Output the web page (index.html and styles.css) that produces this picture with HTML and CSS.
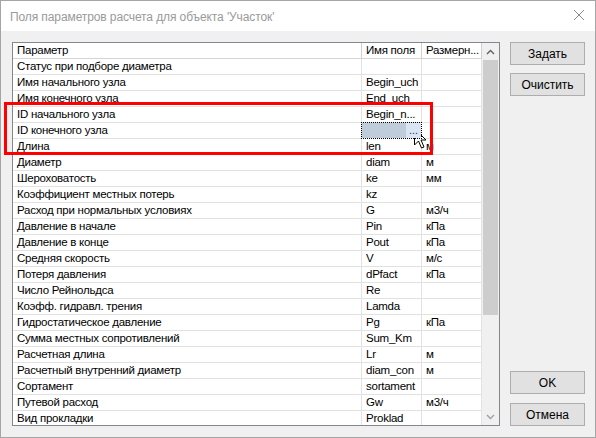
FILE: index.html
```html
<!DOCTYPE html>
<html>
<head>
<meta charset="utf-8">
<link rel="stylesheet" href="styles.css">
</head>
<body>
<div class="window">
  <div class="titlebar">
    <span class="title">Поля параметров расчета для объекта 'Участок'</span>
    <svg class="close" width="12" height="12" viewBox="0 0 12 12"><path d="M1 1 L11 11 M11 1 L1 11" stroke="#8a8a8a" stroke-width="1" fill="none"/></svg>
  </div>
  <div class="content">
    <div class="grid-box">
      <div class="grid">
        <div class="cell head">Параметр</div><div class="cell head">Имя поля</div><div class="cell head">Размерн...</div>
        <div class="cell">Статус при подборе диаметра</div><div class="cell"></div><div class="cell"></div>
        <div class="cell">Имя начального узла</div><div class="cell">Begin_uch</div><div class="cell"></div>
        <div class="cell">Имя конечного узла</div><div class="cell">End_uch</div><div class="cell"></div>
        <div class="cell">ID начального узла</div><div class="cell">Begin_n...</div><div class="cell"></div>
        <div class="cell">ID конечного узла</div><div class="cell selected"><span class="sel-fill"></span><span class="ellipsis-btn">...</span></div><div class="cell"></div>
        <div class="cell">Длина</div><div class="cell">len</div><div class="cell">м</div>
        <div class="cell">Диаметр</div><div class="cell">diam</div><div class="cell">м</div>
        <div class="cell">Шероховатость</div><div class="cell">ke</div><div class="cell">мм</div>
        <div class="cell">Коэффициент местных потерь</div><div class="cell">kz</div><div class="cell"></div>
        <div class="cell">Расход при нормальных условиях</div><div class="cell">G</div><div class="cell">м3/ч</div>
        <div class="cell">Давление в начале</div><div class="cell">Pin</div><div class="cell">кПа</div>
        <div class="cell">Давление в конце</div><div class="cell">Pout</div><div class="cell">кПа</div>
        <div class="cell">Средняя скорость</div><div class="cell">V</div><div class="cell">м/с</div>
        <div class="cell">Потеря давления</div><div class="cell">dPfact</div><div class="cell">кПа</div>
        <div class="cell">Число Рейнольдса</div><div class="cell">Re</div><div class="cell"></div>
        <div class="cell">Коэфф. гидравл. трения</div><div class="cell">Lamda</div><div class="cell"></div>
        <div class="cell">Гидростатическое давление</div><div class="cell">Pg</div><div class="cell">кПа</div>
        <div class="cell">Сумма местных сопротивлений</div><div class="cell">Sum_Km</div><div class="cell"></div>
        <div class="cell">Расчетная длина</div><div class="cell">Lr</div><div class="cell">м</div>
        <div class="cell">Расчетный внутренний диаметр</div><div class="cell">diam_con</div><div class="cell">м</div>
        <div class="cell">Сортамент</div><div class="cell">sortament</div><div class="cell"></div>
        <div class="cell">Путевой расход</div><div class="cell">Gw</div><div class="cell">м3/ч</div>
        <div class="cell">Вид прокладки</div><div class="cell">Proklad</div><div class="cell"></div>
      </div>
      <div class="scrollbar">
        <div class="arrow"><svg width="9" height="6" viewBox="0 0 9 6"><path d="M1 5 L4.5 1.5 L8 5" stroke="#606060" stroke-width="1.4" fill="none"/></svg></div>
        <div class="track"><div class="thumb"></div></div>
        <div class="arrow"><svg width="9" height="6" viewBox="0 0 9 6"><path d="M1 1 L4.5 4.5 L8 1" stroke="#a0a0a0" stroke-width="1.4" fill="none"/></svg></div>
      </div>
    </div>
    <div class="buttons">
      <div class="top-buttons">
        <div class="btn">Задать</div>
        <div class="btn">Очистить</div>
      </div>
      <div class="bottom-buttons">
        <div class="btn">OK</div>
        <div class="btn">Отмена</div>
      </div>
    </div>
  </div>
  <div class="highlight"></div>
  <svg class="cursor" width="14" height="22" viewBox="0 0 14 22"><path d="M0.5 0.5 L0.5 17 L4.5 13 L7.5 20 L10 19 L7 12 L12 12 Z" fill="#fff" stroke="#000" stroke-width="1"/></svg>
</div>
</body>
</html>
```
FILE: styles.css
```css
* { box-sizing: border-box; }
html, body { margin: 0; padding: 0; }
body {
  width: 596px;
  height: 438px;
  overflow: hidden;
  font-family: "Liberation Sans", Arial, sans-serif;
  font-size: 11.5px;
  letter-spacing: -0.25px;
  color: #000;
}
.window {
  position: relative;
  width: 596px;
  height: 438px;
  border: 1px solid #a5a5a5;
  background: #f0f0f0;
  display: flex;
  flex-direction: column;
}
.titlebar {
  height: 30px;
  background: #fff;
  display: flex;
  align-items: center;
  justify-content: space-between;
  padding: 0 10px 0 9px;
  flex-shrink: 0;
}
.title {
  color: #9a9a9a;
  font-size: 12px;
  letter-spacing: -0.1px;
  padding-top: 1px;
}
.close { margin-top: -2px; }
.content {
  flex: 1;
  display: flex;
  padding: 11px 0 0 11px;
}
.grid-box {
  width: 488px;
  height: 384px;
  border: 1px solid #828790;
  background: #fff;
  display: flex;
  overflow: hidden;
}
.grid {
  width: 469px;
  display: grid;
  grid-template-columns: 349px 60px 60px;
  grid-auto-rows: 16px;
  align-content: start;
  overflow: hidden;
}
.cell {
  position: relative;
  border-right: 1px solid #e2e2e2;
  border-bottom: 1px solid #e2e2e2;
  padding: 0 0 0 4px;
  line-height: 15px;
  white-space: nowrap;
  overflow: hidden;
}
.cell.head {
  border-right-color: #d0d0d0;
  border-bottom-color: #d5d5d5;
}
.cell.selected {
  border: 1px dotted #000;
  padding: 0;
  display: flex;
  margin-left: -1px;
  margin-top: -1px;
  height: 17px;
  width: 61px;
  z-index: 1;
}
.sel-fill {
  flex: 1;
  background: #bfcddb;
}
.ellipsis-btn {
  width: 15px;
  background: #d9e5f2;
  color: #333;
  font-size: 11px;
  letter-spacing: 0;
  line-height: 14px;
  text-align: center;
  overflow: hidden;
}
.scrollbar {
  width: 17px;
  display: flex;
  flex-direction: column;
  background: #f0f0f0;
}
.arrow {
  height: 17px;
  display: flex;
  align-items: center;
  justify-content: center;
  flex-shrink: 0;
}
.track {
  flex: 1;
  padding: 0 1px;
  display: flex;
  flex-direction: column;
}
.thumb {
  height: 255px;
  background: #cdcdcd;
}
.buttons {
  margin-left: 10px;
  width: 75px;
  display: flex;
  flex-direction: column;
  justify-content: space-between;
  padding-bottom: 11px;
}
.top-buttons, .bottom-buttons {
  display: flex;
  flex-direction: column;
}
.top-buttons { gap: 8px; }
.bottom-buttons { gap: 9px; }
.btn {
  height: 23px;
  border: 1px solid #adadad;
  background: #e1e1e1;
  display: flex;
  align-items: center;
  justify-content: center;
  font-size: 12px;
  letter-spacing: 0;
}
.highlight {
  position: absolute;
  left: 3px;
  top: 101px;
  width: 429px;
  height: 53px;
  border: 3px solid #ff0000;
  pointer-events: none;
}
.cursor {
  position: absolute;
  left: 413px;
  top: 127px;
}
```
